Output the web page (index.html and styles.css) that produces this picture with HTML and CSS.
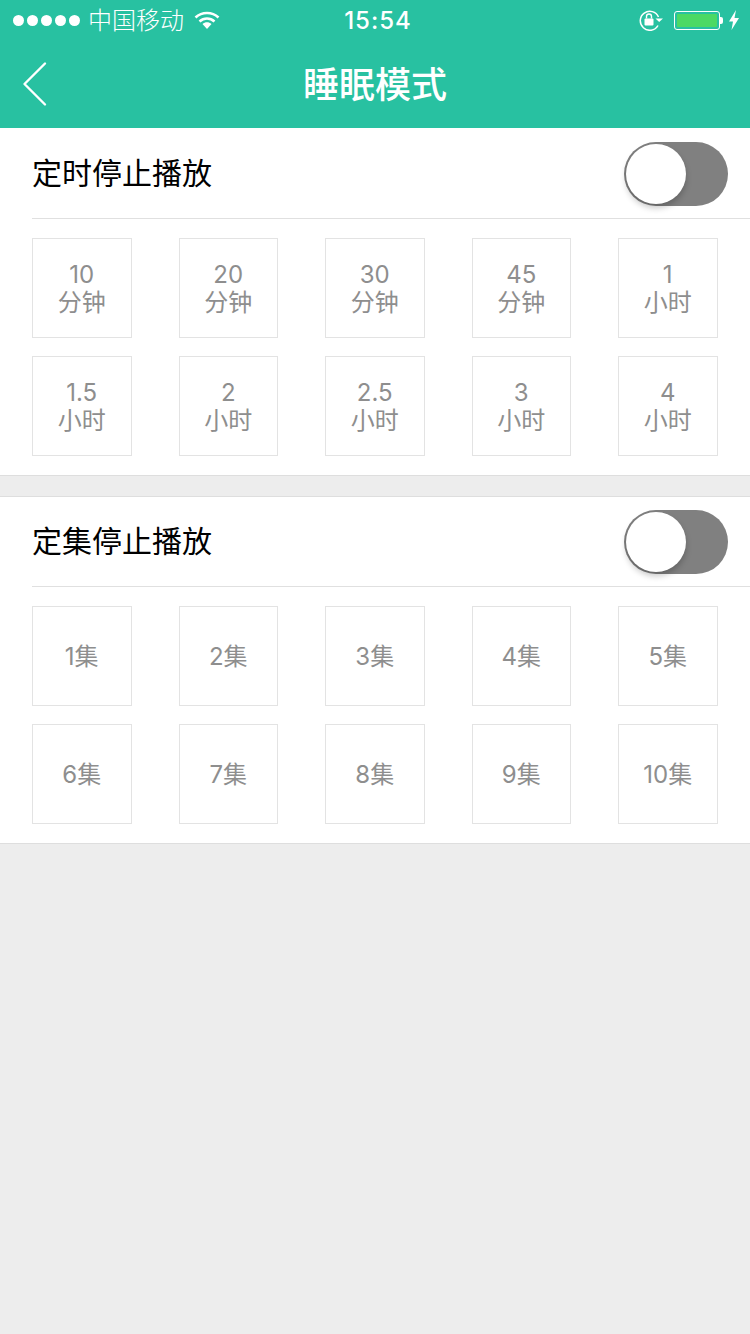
FILE: index.html
```html
<!DOCTYPE html>
<html lang="zh-CN">
<head>
  <meta charset="UTF-8" />
  <title>睡眠模式</title>
  <link rel="stylesheet" href="styles.css">
</head>
<body>
  <div class="header">
    <div class="status-bar">
      <div class="status-left">
        <div class="signal"><i></i><i></i><i></i><i></i><i></i></div>
        <span class="carrier">中国移动</span>
        <svg class="wifi" width="26" height="20" viewBox="0 0 26 20">
          <path d="M1.5 7.5C8 1.5 18 1.5 24.500 7.500" fill="none" stroke="#fff" stroke-width="2.6"/>
          <path d="M5.500 11.500C10 7.500 16 7.500 20.500 11.500" fill="none" stroke="#fff" stroke-width="2.600"/>
          <path d="M8.500 14C11 11.800 15 11.800 17.500 14L13 19Z" fill="#fff"/>
        </svg>
      </div>
      <div class="status-time">15:54</div>
      <div class="status-right">
        <svg class="lock" width="26" height="22" viewBox="0 0 26 22">
          <path d="M20 16.500A9.500 9.500 0 1 1 20.500 8" fill="none" stroke="#fff" stroke-width="1.500"/>
          <path d="M17.500 9.500H25L21.200 13Z" fill="#fff"/>
          <rect x="6.500" y="9.500" width="9" height="7" rx="1" fill="#fff"/>
          <path d="M8.500 9.500V7.500A2.500 2.500 0 0 1 13.500 7.500V9.500" fill="none" stroke="#fff" stroke-width="1.400"/>
        </svg>
        <div class="battery"><div class="battery-fill"></div></div>
        <div class="battery-tip"></div>
        <svg class="bolt" width="12" height="20" viewBox="0 0 12 20">
          <path d="M8 0L1 11.500H5L3.500 20L11 8H6.500Z" fill="#fff"/>
        </svg>
      </div>
    </div>
    <div class="nav-bar">
      <svg class="back" width="26" height="46" viewBox="0 0 26 46">
        <path d="M23 2.500L2.500 23L23 43.500" fill="none" stroke="#fff" stroke-width="2.400" stroke-linecap="round" stroke-linejoin="round"/>
      </svg>
      <h1>睡眠模式</h1>
    </div>
  </div>

  <div class="section">
    <div class="section-head">
      <span class="section-title">定时停止播放</span>
      <div class="switch"><div class="knob"></div></div>
    </div>
    <div class="grid">
      <div class="cell"><span>10</span><span>分钟</span></div>
      <div class="cell"><span>20</span><span>分钟</span></div>
      <div class="cell"><span>30</span><span>分钟</span></div>
      <div class="cell"><span>45</span><span>分钟</span></div>
      <div class="cell"><span>1</span><span>小时</span></div>
      <div class="cell"><span>1.5</span><span>小时</span></div>
      <div class="cell"><span>2</span><span>小时</span></div>
      <div class="cell"><span>2.5</span><span>小时</span></div>
      <div class="cell"><span>3</span><span>小时</span></div>
      <div class="cell"><span>4</span><span>小时</span></div>
    </div>
  </div>

  <div class="section">
    <div class="section-head">
      <span class="section-title">定集停止播放</span>
      <div class="switch"><div class="knob"></div></div>
    </div>
    <div class="grid">
      <div class="cell">1集</div>
      <div class="cell">2集</div>
      <div class="cell">3集</div>
      <div class="cell">4集</div>
      <div class="cell">5集</div>
      <div class="cell">6集</div>
      <div class="cell">7集</div>
      <div class="cell">8集</div>
      <div class="cell">9集</div>
      <div class="cell">10集</div>
    </div>
  </div>
</body>
</html>
```

FILE: styles.css
```css
html, body {
  margin: 0;
  padding: 0;
}

body {
  width: 750px;
  height: 1334px;
  overflow: hidden;
  background: #ededed;
  font-family: "Inter", "Noto Sans CJK SC", sans-serif;
}

.header {
  height: 128px;
  background: #28c1a1;
  color: #fff;
}

.status-bar {
  height: 40px;
  display: grid;
  grid-template-columns: 1fr auto 1fr;
  align-items: center;
}

.status-left {
  display: flex;
  align-items: center;
  padding-left: 13px;
}

.signal {
  display: flex;
  gap: 3px;
}

.signal i {
  width: 11px;
  height: 11px;
  border-radius: 50%;
  background: #fff;
}

.carrier {
  margin-left: 8px;
  padding-bottom: 3px;
  font-size: 24px;
  font-weight: 300;
}

.wifi {
  margin-left: 10px;
}

.status-time {
  margin-left: 6px;
  font-size: 24px;
  font-weight: 500;
  letter-spacing: 1px;
}

.status-right {
  display: flex;
  align-items: center;
  justify-content: flex-end;
  padding-right: 10px;
}

.battery {
  width: 46px;
  height: 19px;
  margin-left: 10px;
  box-sizing: border-box;
  padding: 2px;
  border: 1px solid #fff;
  border-radius: 3px;
}

.battery-fill {
  height: 100%;
  background: #4cd964;
  border-radius: 1px;
}

.battery-tip {
  width: 3px;
  height: 7px;
  background: #fff;
  border-radius: 0 2px 2px 0;
}

.bolt {
  margin-left: 5px;
}

.nav-bar {
  height: 88px;
  display: flex;
  align-items: center;
  justify-content: center;
  position: relative;
}

.nav-bar h1 {
  margin: 0;
  font-size: 36px;
  font-weight: 500;
  padding-bottom: 4px;
}

.back {
  position: absolute;
  left: 22px;
  top: 21px;
}

.section {
  background: #fff;
  padding-left: 32px;
  padding-bottom: 19px;
  margin-bottom: 20px;
  border-bottom: 1px solid #dedede;
}

.section + .section {
  border-top: 1px solid #dedede;
}

.section-head {
  height: 91px;
  box-sizing: border-box;
  display: flex;
  align-items: center;
  justify-content: space-between;
  padding-top: 2px;
  padding-right: 22px;
  border-bottom: 1px solid #e0e0e0;
}

.section + .section .section-head {
  height: 90px;
  padding-top: 1px;
}

.section-title {
  padding-bottom: 7px;
  font-size: 30px;
  color: #000;
}

.switch {
  width: 104px;
  height: 64px;
  box-sizing: border-box;
  background: #808080;
  border-radius: 32px;
  position: relative;
}

.knob {
  position: absolute;
  left: 2px;
  top: 2px;
  width: 60px;
  height: 60px;
  background: #fff;
  border-radius: 50%;
  box-shadow: 0 4px 6px rgba(0, 0, 0, 0.22);
}

.grid {
  display: grid;
  grid-template-columns: repeat(5, 99.5px);
  justify-content: space-between;
  row-gap: 18px;
  width: 685.5px;
  padding-top: 19px;
}

.cell {
  height: 100px;
  box-sizing: border-box;
  padding-top: 2px;
  border: 1px solid #e3e3e3;
  display: flex;
  flex-direction: column;
  align-items: center;
  justify-content: center;
  text-align: center;
  font-size: 24px;
  line-height: 28px;
  color: #8e8e8e;
}
```
